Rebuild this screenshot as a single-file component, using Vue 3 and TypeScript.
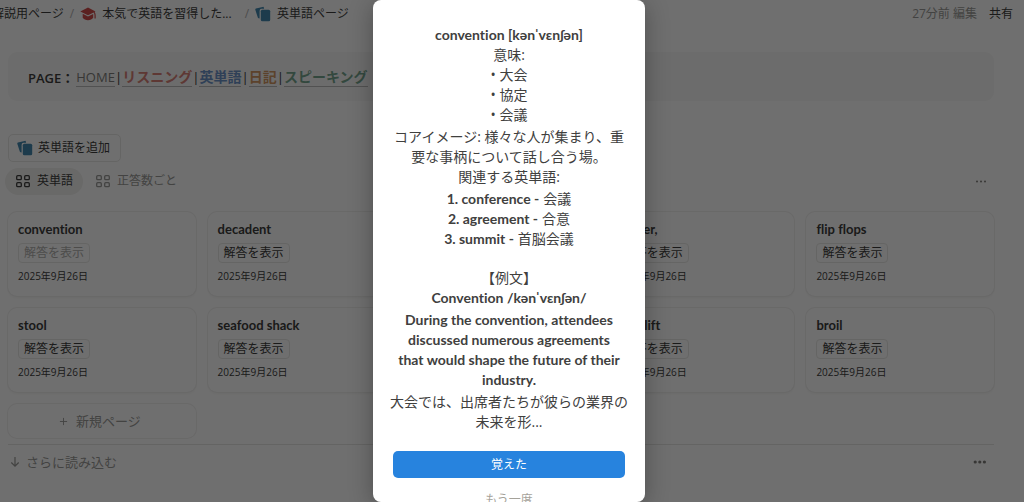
<script setup lang="ts">
interface Card { title: string; pending?: boolean }
const cards: Card[] = [
  { title: 'convention', pending: true }, { title: 'decadent' }, { title: '' }, { title: 'timber,' }, { title: 'flip flops' },
  { title: 'stool' }, { title: 'seafood shack' }, { title: '' }, { title: 'face lift' }, { title: 'broil' },
]
const links = [
  { text: 'HOME', tone: 'plain' }, { text: 'リスニング', tone: 'red' }, { text: '英単語', tone: 'blue' },
  { text: '日記', tone: 'orange' }, { text: 'スピーキング', tone: 'green' },
]
interface Line { en?: string; ja?: string }
const sections: Line[][] = [
  [{ en: 'convention [kənˈvɛnʃən]' }, { ja: '意味:' }, { ja: '• 大会' }, { ja: '• 協定' }, { ja: '• 会議' }],
  [{ ja: 'コアイメージ: 様々な人が集まり、重' }, { ja: '要な事柄について話し合う場。' }, { ja: '関連する英単語:' }],
  [{ en: '1. conference -', ja: '会議' }, { en: '2. agreement -', ja: '合意' }, { en: '3. summit -', ja: '首脳会議' }],
]
const example: Line[][] = [
  [{ ja: '【例文】' }, { en: 'Convention /kənˈvɛnʃən/' }],
  [{ en: 'During the convention, attendees' }, { en: 'discussed numerous agreements' }, { en: 'that would shape the future of their' }, { en: 'industry.' }],
  [{ ja: '大会では、出席者たちが彼らの業界の' }, { ja: '未来を形...' }],
]
</script>

<template>
  <div class="app">
    <header class="topbar">
      <nav class="crumbs">
        <a href="#" class="first">解説用ページ</a><span class="slash">/</span>
        <a href="#" class="course">
          <svg class="icon" viewBox="0 0 16 16" fill="#cd3c3a"><path d="M8 1.500.3 5.400 8 9.300l5.600-2.700c.6.700.9 1.700.9 2.900v3h1.200V9.500c0-1.500-.4-2.700-1.100-3.500l.9-.6z" /><path d="M2.700 7.700v4.100c1.200 1.500 3 2.400 5.300 2.400s4.100-.9 5.200-2.400V7.900L8 10.500z" /></svg>
          本気で英語を習得した...</a><span class="slash">/</span>
        <a href="#">
          <svg class="icon" viewBox="0 0 16 16" fill="#337ea9"><path d="M.9 2.600 7.600.9a1 1 0 0 1 1.300.8l.2 1H7A2.200 2.200 0 0 0 4.600 5v7.500l-1-.2a1 1 0 0 1-.8-.8L.3 3.800a1 1 0 0 1 .6-1.200z" /><rect x="5.800" y="3.800" width="9.400" height="11.400" rx="1.500" /></svg>
          英単語ページ</a>
      </nav>
      <div class="tools"><span class="edited">27分前 編集</span><button type="button">共有</button></div>
    </header>
    <main>
      <section class="callout">
        <b>PAGE：</b>
        <template v-for="(l, i) in links" :key="l.text"><span v-if="i" class="bar">|</span><a href="#" :class="l.tone">{{ l.text }}</a></template>
      </section>
      <button type="button" class="add">
        <svg class="icon" viewBox="0 0 16 16" fill="#337ea9"><path d="M.9 2.600 7.600.9a1 1 0 0 1 1.300.8l.2 1H7A2.200 2.200 0 0 0 4.600 5v7.500l-1-.2a1 1 0 0 1-.8-.8L.3 3.800a1 1 0 0 1 .6-1.200z" /><rect x="5.800" y="3.800" width="9.400" height="11.400" rx="1.500" /></svg>
        英単語を追加
      </button>
      <div class="views">
        <button v-for="(v, i) in ['英単語', '正答数ごと']" :key="v" type="button" class="tab" :class="{ active: i === 0 }">
          <svg class="icon" viewBox="0 0 16 16" fill="none" stroke="currentColor" stroke-width="1.300"><rect x="1.700" y="2.700" width="4.600" height="4" rx="1" /><rect x="9.700" y="2.700" width="4.600" height="4" rx="1" /><rect x="1.700" y="9.700" width="4.600" height="4" rx="1" /><rect x="9.700" y="9.700" width="4.600" height="4" rx="1" /></svg>
          {{ v }}
        </button>
        <button type="button" class="more" aria-label="その他">
          <svg viewBox="0 0 16 16" fill="currentColor"><circle cx="4" cy="8.500" r="1" /><circle cx="8" cy="8.500" r="1" /><circle cx="12" cy="8.500" r="1" /></svg>
        </button>
      </div>
      <section class="grid">
        <article v-for="(c, i) in cards" :key="i" class="card">
          <template v-if="c.title">
            <h3>{{ c.title }}</h3>
            <button type="button" :disabled="c.pending">解答を表示</button>
            <time datetime="2025-09-26">2025年9月26日</time>
          </template>
        </article>
        <button type="button" class="new">
          <svg viewBox="0 0 10 10" fill="none" stroke="currentColor"><path d="M5 1v8M1 5h8" /></svg>新規ページ
        </button>
      </section>
      <footer>
        <button type="button" class="load">
          <svg viewBox="0 0 10 12" fill="none" stroke="currentColor" stroke-width="1.200"><path d="M5 1v9M1.300 6.500 5 10.200l3.700-3.700" /></svg>さらに読み込む
        </button>
        <button type="button" class="more" aria-label="その他">
          <svg viewBox="0 0 16 16" fill="currentColor"><circle cx="2.200" cy="8" r="1.600" /><circle cx="6.800" cy="8" r="1.600" /><circle cx="11.400" cy="8" r="1.600" /></svg>
        </button>
      </footer>
    </main>
    <div class="overlay">
      <div class="modal" role="dialog" aria-modal="true" aria-label="convention">
        <div v-for="(block, b) in [sections, example]" :key="b" class="text">
          <div v-for="(s, i) in block" :key="i">
            <p v-for="(l, n) in s" :key="n"><strong v-if="l.en">{{ l.en }}</strong><span v-if="l.ja">{{ l.ja }}</span></p>
          </div>
        </div>
        <button type="button" class="primary">覚えた</button>
        <button type="button" class="again">もう一度</button>
      </div>
    </div>
  </div>
</template>

<style>
body { margin: 0; background: #fff; }
</style>

<style scoped>
* { box-sizing: border-box; }
.app { position: relative; height: 100vh; overflow: hidden; color: #2c2c2b; font: 12px/20px "Open Sans", "Noto Sans CJK JP", sans-serif; font-variant-ligatures: none; white-space: nowrap; }
button { display: flex; align-items: center; margin: 0; padding: 0; border: 0; background: none; color: inherit; font: inherit; }
a { color: inherit; text-decoration: none; }
svg { flex: none; }
.icon { width: 16px; height: 16px; }
.topbar { display: flex; align-items: center; justify-content: space-between; height: 28px; padding-right: 11px; }
.crumbs { display: flex; align-items: center; }
.crumbs a { display: flex; align-items: center; gap: 6px; }
.first { margin-left: -8px; }
.slash { margin: 0 6px; color: #aaa; }
.course { padding-right: 7px; }
.tools { display: flex; gap: 12px; }
.edited { color: #91918e; }
main { padding: 24px 30px 0 8px; }
.callout { display: flex; align-items: center; gap: 2px; height: 49px; padding: 2px 20px 0; border-radius: 9px; background: #f8f8f7; font-size: 14px; }
.callout b { font-size: 13px; font-weight: 600; }
.callout a { border-bottom: 1px solid #b5b5b5; line-height: 18px; font-weight: 700; }
.callout a.plain { font-size: 13px; font-weight: 400; color: #73726e; }
.bar { font-family: Lato, sans-serif; font-size: 13px; }
.red { color: #d5756c; } .blue { color: #6089c4; } .orange { color: #cf8f55; } .green { color: #6a9e86; }
.add { height: 28px; margin-top: 33px; padding: 0 10px 0 8px; gap: 5px; border: 1px solid #e6e6e4; border-radius: 5px; }
.views { display: flex; align-items: center; gap: 2px; height: 28px; margin: 5px 0 17px -3px; }
.tab { height: 27px; padding: 0 10px; gap: 6px; border-radius: 14px; color: #91918e; }
.tab.active { background: #f0efed; color: #2c2c2b; }
.more { margin-left: auto; margin-right: 5px; color: #73726e; }
.more svg { width: 16px; height: 16px; }
.grid { display: grid; grid-template-columns: repeat(5, minmax(0, 1fr)); gap: 12px; }
.card { height: 84px; padding: 7px 10px; border-radius: 9px; box-shadow: 0 0 0 1px #f0efee, 0 2px 3px #f5f5f4; }
.card h3 { height: 20px; margin: 0; font: 700 13px/20px Lato, sans-serif; font-variant-ligatures: none; }
.card button { height: 20px; margin: 4px 0 3px; padding: 0 5px; border: 1px solid #e6e6e4; border-radius: 4px; }
.card button:disabled { color: #aaa9a6; }
.card time { display: block; font-size: 10px; }
.new { height: 34px; justify-content: center; gap: 8px; padding-right: 4px; border-radius: 9px; box-shadow: 0 0 0 1px #f0efee; color: #91918e; font-size: 13px; }
.new svg { width: 9px; height: 9px; }
footer { display: flex; align-items: center; height: 34px; margin-top: 6px; border-top: 1px solid #e4e4e2; color: #91918e; font-size: 13px; }
.load { padding-left: 2px; gap: 6px; }
.load svg { width: 10px; height: 12px; }
.overlay { position: absolute; inset: 0; display: flex; justify-content: center; padding-right: 6px; background: rgba(15, 15, 15, .6); }
.modal { display: flex; flex-direction: column; width: 272px; padding: 25px 20px 0; overflow: hidden; border-radius: 8px; background: #fff; box-shadow: 0 4px 24px rgba(0, 0, 0, .3); color: #40403e; }
.text { display: flex; flex-direction: column; gap: 2px; margin-bottom: 19px; font-size: 14px; }
.text p { display: flex; align-items: baseline; justify-content: center; gap: 4px; height: 20px; margin: 0; line-height: 20px; }
.text strong { font: 700 14px/20px Lato, "Open Sans", sans-serif; font-variant-ligatures: none; }
.primary { flex: none; height: 27px; justify-content: center; border-radius: 5px; background: #2783de; color: #fff; }
.again { flex: none; height: 27px; margin-top: 8px; justify-content: center; color: #a5a29a; }
</style>
